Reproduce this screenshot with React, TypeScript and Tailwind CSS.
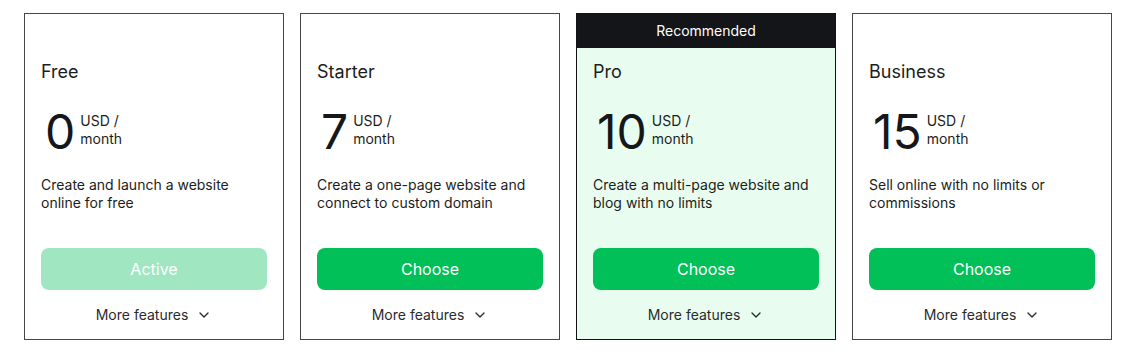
import { ChevronDown } from "lucide-react";

type Plan = {
	name: string;
	price: string;
	desc: string[];
	cta: string;
	active?: boolean;
	recommended?: boolean;
};

const plans: Plan[] = [
	{ name: "Free", price: "0", desc: ["Create and launch a website", "online for free"], cta: "Active", active: true },
	{ name: "Starter", price: "7", desc: ["Create a one-page website and", "connect to custom domain"], cta: "Choose" },
	{ name: "Pro", price: "10", desc: ["Create a multi-page website and", "blog with no limits"], cta: "Choose", recommended: true },
	{ name: "Business", price: "15", desc: ["Sell online with no limits or", "commissions"], cta: "Choose" },
];

const PlanCard = ({ plan }: { plan: Plan }) => (
	<div
		className={
			plan.recommended
				? "w-[260px] flex flex-col border border-[#111214] bg-[#e8fdf0]"
				: "w-[260px] flex flex-col border border-[#45464a] bg-white"
		}
	>
		{plan.recommended ? (
			<div className="h-[34px] bg-[#141518] text-white text-sm leading-[34px] text-center">
				Recommended
			</div>
		) : (
			<div className="h-[34px]" />
		)}
		<div className="px-4 pt-[10px] pb-[14px] flex flex-col">
			<h5 className="text-lg leading-7 text-[#1c1d20]">{plan.name}</h5>
			<div className="mt-[22px] flex items-start ml-1">
				<span className="text-5xl leading-none text-[#16171a]">{plan.price}</span>
				<span className="ml-[5px] mt-1 text-sm leading-[18px] text-[#1c1d20]">
					USD /<br />month
				</span>
			</div>
			<p className="mt-5 text-sm leading-[18px] text-[#1c1d20]">
				{plan.desc[0]}
				<br />
				{plan.desc[1]}
			</p>
			<button
				className={
					plan.active
						? "mt-9 h-[42px] rounded-lg bg-[#a0e7c1] text-white text-base"
						: "mt-9 h-[42px] rounded-lg bg-[#00c057] text-white text-base"
				}
			>
				{plan.cta}
			</button>
			<div className="mt-[15px] flex items-center justify-center gap-2 text-sm leading-5 text-[#2a2b2e]">
				<span>More features</span>
				<ChevronDown size={16} strokeWidth={2} />
			</div>
		</div>
	</div>
);

export default function App() {
	return (
		<div
			className="w-[1133px] h-[356px] bg-white pt-[13px] pl-6 flex items-start gap-4"
			style={{ fontFamily: "Inter, 'Noto Sans', sans-serif" }}
		>
			{plans.map((p) => (
				<PlanCard key={p.name} plan={p} />
			))}
		</div>
	);
}
